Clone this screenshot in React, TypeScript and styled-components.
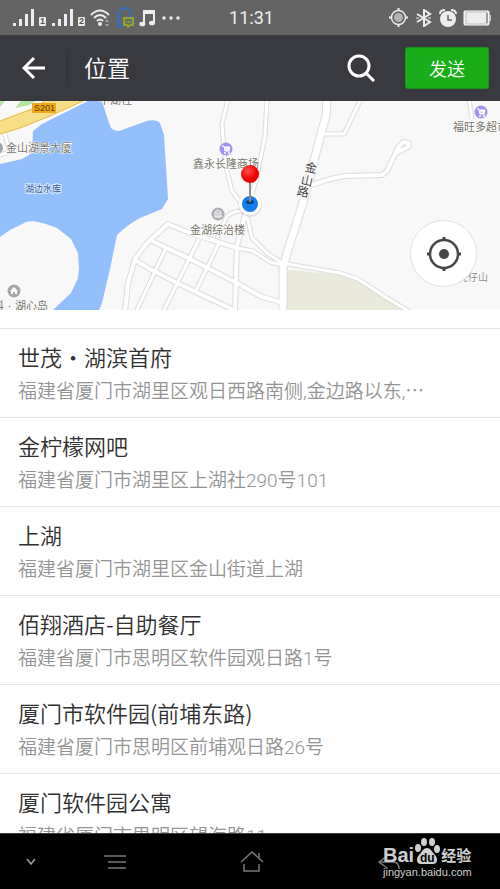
import React from "react";
import styled, { createGlobalStyle } from "styled-components";

const GlobalStyle = createGlobalStyle`
  * { box-sizing: border-box; }
  body {
    margin: 0;
    background: #fff;
    font-family: "Noto Sans CJK SC", "Noto Sans", sans-serif;
  }
  button { font-family: inherit; border: 0; padding: 0; background: none; cursor: pointer; }
  svg { display: block; }
`;

const Screen = styled.div`
  display: flex;
  flex-direction: column;
  height: 100vh;
  overflow: hidden;
`;

const StatusBar = styled.div`
  flex: none;
  display: grid;
  grid-template-columns: 1fr auto 1fr;
  align-items: center;
  height: 35px;
  padding: 0 9px 0 12px;
  background: #646464;
  color: #ededed;
`;

const StatusGroup = styled.div<{ $end?: boolean }>`
  display: flex;
  align-items: center;
  justify-content: ${(p) => (p.$end ? "flex-end" : "flex-start")};
  gap: 5px;
`;

const Clock = styled.time`
  font: 18px/24px Roboto, sans-serif;
`;

const Header = styled.header`
  flex: none;
  display: flex;
  align-items: center;
  height: 66px;
  padding-right: 11px;
  background: #393a3f;
  color: #fff;
`;

const BackButton = styled.button`
  display: grid;
  place-items: center;
  width: 68px;
  height: 34px;
  border-right: 1px solid #2e2f33;
`;

const Title = styled.h1`
  flex: 1;
  margin: 0;
  padding: 0 0 2px 16px;
  font-size: 23px;
  line-height: 32px;
  font-weight: 350;
`;

const SearchButton = styled.button`
  display: grid;
  place-items: center;
  width: 40px;
  height: 40px;
  margin-right: 24px;
`;

const SendButton = styled.button`
  width: 84px;
  height: 42px;
  border: 1px solid #189a18;
  border-radius: 3px;
  background: #1aad19;
  color: #fff;
  font-size: 18px;
  line-height: 24px;
  font-weight: 350;
`;

const MapView = styled.section`
  flex: none;
  position: relative;
  height: 209px;
  background: #f7f7f7;
  overflow: hidden;
`;

const MapDrawing = styled.svg`
  width: 100%;
  height: 100%;
`;

const LocateButton = styled.button`
  position: absolute;
  right: 23px;
  bottom: 23px;
  display: grid;
  place-items: center;
  width: 67px;
  height: 67px;
  border: 1px solid #e2e2e2;
  border-radius: 50%;
  background: #fff;
`;

const PlaceList = styled.ul`
  flex: 1;
  min-height: 0;
  margin: 18px 0 0;
  padding: 0;
  list-style: none;
  overflow: hidden;
  background: #fff;
`;

const PlaceRow = styled.li`
  height: 89px;
  padding: 11px 18px 0;
  border-top: 1px solid #e6e6e6;
`;

const PlaceName = styled.div`
  color: #303030;
  font-size: 22px;
  line-height: 32px;
  font-weight: 350;
  white-space: nowrap;
`;

const PlaceAddress = styled.div`
  margin-top: 4px;
  color: #949494;
  font-family: Roboto, "Noto Sans CJK SC", sans-serif;
  font-size: 19px;
  line-height: 32px;
  font-weight: 350;
  white-space: nowrap;
`;

const NavBar = styled.nav`
  flex: none;
  position: relative;
  display: flex;
  align-items: center;
  height: 56px;
  border-top: 1px solid #3a3a3a;
  background: #000;
`;

const NavButton = styled.button<{ $grow: number }>`
  flex: ${(p) => p.$grow} 1 0;
  display: grid;
  place-items: center;
  height: 55px;
`;

const Watermark = styled.div`
  position: absolute;
  right: 26px;
  top: 2px;
  width: 91px;
  color: #cfcfcf;
`;

const Brand = styled.div`
  display: flex;
  align-items: flex-end;
  height: 29px;
`;

const BrandWord = styled.span<{ $cjk?: boolean }>`
  font-family: ${(p) => (p.$cjk ? '"Noto Sans CJK SC"' : '"Liberation Sans"')}, sans-serif;
  font-size: ${(p) => (p.$cjk ? 15 : 20)}px;
  line-height: 20px;
  font-weight: 700;
`;

const Site = styled.div`
  font: 11px/14px "Liberation Sans", sans-serif;
  white-space: nowrap;
`;

const Signal = ({ n }: { n: string }) => (
  <svg width="34" height="20" viewBox="0 0 34 20">
    <g fill="#ededed">
      <rect x="1" y="15" width="3" height="3" />
      <rect x="7" y="11" width="3" height="7" />
      <rect x="13" y="6" width="3" height="12" />
      <rect x="19" y="1" width="3" height="17" />
      <rect x="27" y="9" width="7" height="9" rx="1" />
    </g>
    <text x="28" y="16" fontFamily="Liberation Sans" fontWeight="700" fontSize="9" fill="#555">{n}</text>
  </svg>
);

const Wifi = () => (
  <svg width="21" height="20" viewBox="0 0 21 20" fill="none" stroke="#ededed" strokeWidth="2">
    <path d="M1 7Q10 -2 19 7M4 10Q10 4 16 10M7 13Q10 10 13 13" />
    <circle cx="10" cy="16" r="2" fill="#ededed" stroke="none" />
    <path d="M15 14l2-3 2 3zM15 16l2 3 2-3z" fill="#a5a5a5" stroke="none" />
  </svg>
);

const Messenger = () => (
  <svg width="18" height="21" viewBox="0 0 18 21" fill="none">
    <path d="M3 10V7C3-1 15-1 15 7v4M3 9L1 14l2 1 1 1-2 3h4" stroke="#1d78e0" strokeWidth="1.5" />
    <path d="M8 11h9v7h-3l-2 2-1-2H8z" fill="#696e56" stroke="#9ab824" strokeWidth="1.5" />
    <path d="M10 15h5" stroke="#b4d42e" strokeDasharray="1 1" />
  </svg>
);

const Music = () => (
  <svg width="17" height="18" viewBox="0 0 17 18" fill="#ededed">
    <path d="M4 1h12v13h-2V5H6v10H4z" />
    <ellipse cx="3.300" cy="15" rx="3" ry="2.300" />
    <ellipse cx="13" cy="14" rx="3" ry="2.300" />
  </svg>
);

const More = () => (
  <svg width="20" height="6" viewBox="0 0 20 6" fill="#ededed">
    <circle cx="3" cy="3" r="1.700" /><circle cx="10" cy="3" r="1.700" /><circle cx="17" cy="3" r="1.700" />
  </svg>
);

const Gps = () => (
  <svg width="19" height="19" viewBox="0 0 19 19">
    <circle cx="9.500" cy="9.500" r="7" fill="none" stroke="#ededed" strokeWidth="1.500" />
    <circle cx="9.500" cy="9.500" r="4.500" fill="#b3b3b3" />
    <path d="M9.500 0v3M9.500 16v3M0 9.500h3M16 9.500h3" stroke="#ededed" strokeWidth="2" />
  </svg>
);

const Bluetooth = () => (
  <svg width="20" height="18" viewBox="0 0 20 18" fill="none" stroke="#ededed" strokeWidth="2">
    <path d="M4 5l13 8-6 4V1l6 4-13 8" />
    <path d="M3 9h3M15 9h3" strokeWidth="1" />
  </svg>
);

const Alarm = () => (
  <svg width="20" height="18" viewBox="0 0 20 18">
    <circle cx="10" cy="10" r="8" fill="#ededed" />
    <path d="M2 5Q2 1 7 1M18 5Q18 1 13 1" stroke="#ededed" strokeWidth="2" fill="none" />
    <path d="M10 6v5h4" stroke="#646464" strokeWidth="1.500" fill="none" />
  </svg>
);

const Battery = () => (
  <svg width="28" height="16" viewBox="0 0 28 16">
    <rect x="1" y="1" width="25" height="14" rx="1" fill="#ededed" stroke="#fff" />
    <path d="M3 2h21v12H3z" fill="none" stroke="#bdbdbd" />
    <path d="M24 3v10" stroke="#6a6a6a" />
    <rect x="26" y="5" width="2" height="6" fill="#c8c8c8" />
  </svg>
);

const THIN_ROADS = [
  "M228 99L222 124L225 163L232 191L247 211",
  "M267 99L265 136L256 181L248 205",
  "M217 238L227 216L234 212L246 210",
  "M199 239L163 312",
  "M219 243L195 293",
  "M166 248L136 312",
  "M325 134H344L361 99",
  "M469 99L472 119",
  "M247 216L252 238L267 253L282 263L340 273L358 279L387 298L410 312",
  "M237 248L253 251L270 262L282 265",
  "M5 134L8 146M0 155L12 151",
];

const ROADS = [
  "M246 211L237 246L236 276L235 312",
  "M125 312L128 283L135 259L147 243L168 224L190 233L237 248",
  "M152 241L190 259L237 283L260 296L283 303",
  "M135 260L150 269L177 283L236 311",
  "M308 186L330 179L345 176L382 175L387 171L398 148L403 142L409 143L408 147L396 153",
];

const MAIN_ROAD = "M327 99L326 116L320 138L302 206L287 253L283 269V312";

const Cart = ({ x, y }: { x: number; y: number }) => (
  <g transform={`translate(${x} ${y})`}>
    <circle r="6.500" fill="#a294ee" />
    <path d="M-4-3h2l1 5h5M-1-2h5l-1 3h-4z" stroke="#fff" fill="#fff" />
    <circle cx="-1" cy="4" r="1" fill="#fff" /><circle cx="3" cy="4" r="1" fill="#fff" />
  </g>
);

const MapArt = () => (
  <MapDrawing viewBox="0 101 500 209" preserveAspectRatio="xMidYMid slice" role="img" aria-label="地图">
    <defs>
      <radialGradient id="pin" cx="38%" cy="32%">
        <stop offset="0" stopColor="#ff5145" />
        <stop offset="1" stopColor="#ef0000" />
      </radialGradient>
    </defs>
    <rect y="101" width="500" height="209" fill="#f8f8f8" />
    <path d="M0 101h5l-5 6zM15 108l6-7h15l-7 4z" fill="#b5e3a1" />
    <path
      d="M88 101H102L107 117L111 128Q114 131 119 131L147 121Q156 119 160 123L164 135L168 199L162 209L140 218Q127 225 117 235L110 269L102 303L99 310H53L71 293L78 278L79 269L78 253L71 239L57 228Q45 223 33 221L26 222L10 230L0 237V164L22 159L32 153L33 131L42 124L68 111Z"
      fill="#93bffc"
    />
    <path d="M286 275Q287 270 292 270L340 275L358 281L387 300L404 310H287Z" fill="#e9eadc" />
    <g fill="none" strokeLinejoin="round">
      <g stroke="#dcdcdc">
        {THIN_ROADS.map((d) => <path key={d} d={d} strokeWidth="5" />)}
        {ROADS.map((d) => <path key={d} d={d} strokeWidth="6" />)}
        <path d={MAIN_ROAD} strokeWidth="9" />
      </g>
      <g stroke="#fff">
        {THIN_ROADS.map((d) => <path key={d} d={d} strokeWidth="3" />)}
        {ROADS.map((d) => <path key={d} d={d} strokeWidth="4" />)}
        <path d={MAIN_ROAD} strokeWidth="7" />
      </g>
    </g>
    <path d="M0 121L32 109L45 101H83L50 116L20 128L0 134Z" fill="#f8df87" />
    <path d="M0 121L32 109L45 101M83 101L50 116L20 128L0 134" fill="none" stroke="#e8b93e" />
    <rect x="32" y="103" width="24" height="10" rx="1" fill="#f0a818" />
    <text x="34" y="111" fontFamily="Liberation Sans" fontSize="9" fill="#5c4210">S201</text>

    <Cart x={226} y={149} />
    <Cart x={481} y={112} />
    <circle cx="218" cy="214" r="6.500" fill="#acaeb6" />
    <path d="M215 217v-5l3-2 3 2v5zM217 212v5M219 212v5" fill="none" stroke="#fff" />
    <circle cx="14" cy="291" r="6.500" fill="#a5a5ab" />
    <path d="M10 291l4-4 4 4h-1v3h-2v-2h-2v2h-2v-3z" fill="#fff" />
    <circle cx="-3" cy="148" r="6" fill="#a5a5ab" />

    <g fontSize="11" fill="#77756b" stroke="#fff" strokeWidth="1" paintOrder="stroke">
      <text x="99" y="104">中湖社</text>
      <text x="6" y="152">金山湖景大厦</text>
      <text x="193" y="168">鑫永长隆商场</text>
      <text x="190" y="234">金湖综治楼</text>
      <text x="453" y="131">福旺多超市</text>
      <text x="-7" y="310">科</text>
      <text x="8" y="310" fontFamily="Noto Sans">·</text>
      <text x="15" y="310">湖心岛</text>
      <text x="458" y="281" fontSize="10" fill="#8c8c8c">虎仔山</text>
      <text x="25" y="192" fontSize="9" fill="#2f609c" stroke="#d8e8fd" strokeWidth="2">湖边水库</text>
      <g fill="#444" fontSize="12" textAnchor="middle">
        <text transform="translate(310 172) rotate(12)">金</text>
        <text transform="translate(306 185) rotate(12)">山</text>
        <text transform="translate(302 196) rotate(12)">路</text>
      </g>
    </g>

    <circle cx="250" cy="205" r="12" fill="#000" opacity="0.08" />
    <circle cx="250" cy="204" r="11" fill="#fff" />
    <circle cx="250" cy="204" r="8" fill="#157eea" />
    <ellipse cx="250" cy="202" rx="4" ry="2" fill="#09407c" />
    <path d="M250 182v20" stroke="#8c8c8c" strokeWidth="2" />
    <circle cx="250" cy="174" r="9" fill="url(#pin)" />
  </MapDrawing>
);

const PLACES = [
  { name: "世茂・湖滨首府", address: "福建省厦门市湖里区观日西路南侧,金边路以东,⋯" },
  { name: "金柠檬网吧", address: "福建省厦门市湖里区上湖社290号101" },
  { name: "上湖", address: "福建省厦门市湖里区金山街道上湖" },
  { name: "佰翔酒店-自助餐厅", address: "福建省厦门市思明区软件园观日路1号" },
  { name: "厦门市软件园(前埔东路)", address: "福建省厦门市思明区前埔观日路26号" },
  { name: "厦门软件园公寓", address: "福建省厦门市思明区望海路11" },
];

export default function App() {
  return (
    <Screen>
      <GlobalStyle />
      <StatusBar>
        <StatusGroup>
          <Signal n="1" />
          <Signal n="2" />
          <Wifi />
          <Messenger />
          <Music />
          <More />
        </StatusGroup>
        <Clock>11:31</Clock>
        <StatusGroup $end>
          <Gps />
          <Bluetooth />
          <Alarm />
          <Battery />
        </StatusGroup>
      </StatusBar>

      <Header>
        <BackButton aria-label="返回">
          <svg width="24" height="24" viewBox="0 0 24 24" fill="none" stroke="#fff" strokeWidth="3">
            <path d="M12 2L2 12l10 10M2 12h21" />
          </svg>
        </BackButton>
        <Title>位置</Title>
        <SearchButton aria-label="搜索">
          <svg width="28" height="28" viewBox="0 0 28 28" fill="none" stroke="#fff" strokeWidth="3">
            <circle cx="12" cy="12" r="10" />
            <path d="M19 19l8 8" />
          </svg>
        </SearchButton>
        <SendButton>发送</SendButton>
      </Header>

      <MapView>
        <MapArt />
        <LocateButton aria-label="定位">
          <svg width="34" height="34" viewBox="0 0 34 34" fill="none" stroke="#464646">
            <circle cx="17" cy="17" r="14" strokeWidth="2.500" />
            <path d="M17 0v4M17 30v4M0 17h4M30 17h4" strokeWidth="3" />
            <circle cx="17" cy="17" r="5" fill="#464646" stroke="none" />
          </svg>
        </LocateButton>
      </MapView>

      <PlaceList>
        {PLACES.map((p) => (
          <PlaceRow key={p.name}>
            <PlaceName>{p.name}</PlaceName>
            <PlaceAddress>{p.address}</PlaceAddress>
          </PlaceRow>
        ))}
      </PlaceList>

      <NavBar>
        <NavButton $grow={62} aria-label="收起">
          <svg width="10" height="8" viewBox="0 0 10 8" fill="none" stroke="#a0a0a0" strokeWidth="1.500">
            <path d="M1 1l4 5 4-5" />
          </svg>
        </NavButton>
        <NavButton $grow={105} aria-label="菜单">
          <svg width="24" height="16" viewBox="0 0 24 16" fill="none" stroke="#777" strokeWidth="1.500">
            <path d="M1 2h22M5 8h18M5 14h18" />
          </svg>
        </NavButton>
        <NavButton $grow={169} aria-label="主页">
          <svg width="24" height="22" viewBox="0 0 24 22" fill="none" stroke="#777" strokeWidth="1.500">
            <path d="M1 11L12 1l11 10M19 2v5M4 13v7h15v-7" />
          </svg>
        </NavButton>
        <NavButton $grow={164} aria-label="后退">
          <svg width="82" height="22" viewBox="0 0 82 22" fill="none" stroke="#777" strokeWidth="1.500">
            <path d="M10 5l-8 6 8 6M2 11h14q6 0 6 7" />
          </svg>
        </NavButton>
        <Watermark>
          <Brand>
            <BrandWord>Bai</BrandWord>
            <svg width="27" height="28" viewBox="0 0 27 28" fill="#cfcfcf">
              <ellipse cx="4" cy="11" rx="3" ry="4" />
              <ellipse cx="10" cy="5" rx="3" ry="4" />
              <ellipse cx="18" cy="5" rx="3" ry="4" />
              <ellipse cx="23" cy="12" rx="3" ry="4" />
              <path d="M13 11c4 0 5 4 8 7s3 9-2 9H7c-5 0-5-6-2-9s4-7 8-7z" />
              <text x="6" y="25" fontFamily="Liberation Sans" fontWeight="700" fontSize="12" fill="#000">du</text>
            </svg>
            <BrandWord $cjk>经验</BrandWord>
          </Brand>
          <Site>jingyan.baidu.com</Site>
        </Watermark>
      </NavBar>
    </Screen>
  );
}
